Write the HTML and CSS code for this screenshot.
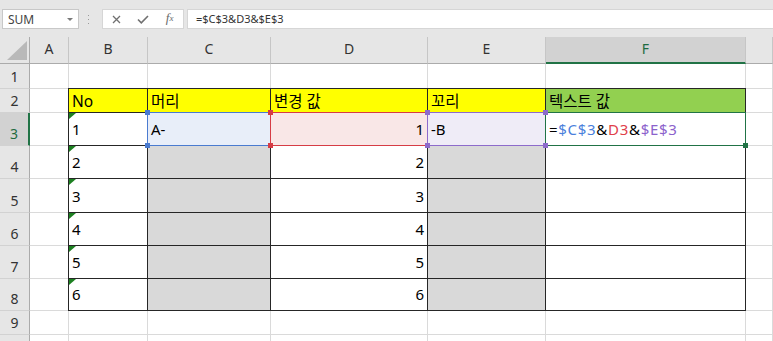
FILE: index.html
```html
<!DOCTYPE html>
<html lang="ko">
<head>
<meta charset="utf-8">
<title>Excel</title>
<link rel="stylesheet" href="styles.css">
</head>
<body>
<div class="bar">
  <div class="namebox"><span>SUM</span><span class="caret"></span></div>
  <svg class="grip" width="3" height="10" viewBox="0 0 3 10"><rect x="1" y="0" width="1" height="1" fill="#9a9a9a"/><rect x="1" y="4" width="1" height="1" fill="#9a9a9a"/><rect x="1" y="8" width="1" height="1" fill="#9a9a9a"/></svg>
  <div class="fxbox">
    <span class="ico"><svg width="9" height="9" viewBox="0 0 9 9"><path d="M1 1L8 8M8 1L1 8" stroke="#707070" stroke-width="1.3" fill="none"/></svg></span>
    <span class="ico"><svg width="12" height="9" viewBox="0 0 12 9"><path d="M1 4.5L4.3 7.8L11 1" stroke="#707070" stroke-width="1.6" fill="none"/></svg></span>
    <span class="ico fx">f<sub>x</sub></span>
  </div>
  <div class="formula">=$C$3&amp;D3&amp;$E$3</div>
</div>
<div class="sheet">
  <!-- header -->
  <div class="c corner"><svg width="21" height="20" viewBox="0 0 21 20"><polygon points="20,0 20,19 0,19" fill="#b9b9b9"/></svg></div>
  <div class="c ch">A</div><div class="c ch">B</div><div class="c ch">C</div><div class="c ch">D</div><div class="c ch">E</div><div class="c ch sel">F</div><div class="c ch"></div>
  <!-- row 1 -->
  <div class="c rh">1</div><div class="c"></div><div class="c"></div><div class="c"></div><div class="c"></div><div class="c"></div><div class="c"></div><div class="c"></div>
  <!-- row 2 -->
  <div class="c rh">2</div><div class="c"></div>
  <div class="c t hd yel tl tt">No</div>
  <div class="c t hd yel tt">머리</div>
  <div class="c t hd yel tt">변경 값</div>
  <div class="c t hd yel tt">꼬리</div>
  <div class="c t hd grn tt">텍스트 값</div>
  <div class="c"></div>
  <!-- row 3 -->
  <div class="c rh rsel">3</div><div class="c"></div>
  <div class="c t v tl tri">1</div>
  <div class="c t v rel fb">A-<span class="ref blue"><span class="h h1"></span><span class="h h2"></span><span class="h h3"></span><span class="h h4"></span></span></div>
  <div class="c t v rel fr num">1<span class="ref red"><span class="h h1"></span><span class="h h2"></span><span class="h h3"></span><span class="h h4"></span></span></div>
  <div class="c t v rel fp">-B<span class="ref purple"><span class="h h1"></span><span class="h h2"></span><span class="h h3"></span><span class="h h4"></span></span></div>
  <div class="c t v rel"><span class="fm"><span>=</span><span class="kb">$C$3</span><span>&amp;</span><span class="kr">D3</span><span>&amp;</span><span class="kp">$E$3</span></span><span class="ref active"><span class="h h4"></span></span></div>
  <div class="c"></div>
  <!-- row 4 -->
  <div class="c rh">4</div><div class="c"></div>
  <div class="c t v tl tri">2</div><div class="c t gry"></div><div class="c t v num">2</div><div class="c t gry"></div><div class="c t"></div><div class="c"></div>
  <!-- row 5 -->
  <div class="c rh">5</div><div class="c"></div>
  <div class="c t v tl tri">3</div><div class="c t gry"></div><div class="c t v num">3</div><div class="c t gry"></div><div class="c t"></div><div class="c"></div>
  <!-- row 6 -->
  <div class="c rh">6</div><div class="c"></div>
  <div class="c t v tl tri">4</div><div class="c t gry"></div><div class="c t v num">4</div><div class="c t gry"></div><div class="c t"></div><div class="c"></div>
  <!-- row 7 -->
  <div class="c rh">7</div><div class="c"></div>
  <div class="c t v tl tri">5</div><div class="c t gry"></div><div class="c t v num">5</div><div class="c t gry"></div><div class="c t"></div><div class="c"></div>
  <!-- row 8 -->
  <div class="c rh">8</div><div class="c"></div>
  <div class="c t v tl tri">6</div><div class="c t gry"></div><div class="c t v num">6</div><div class="c t gry"></div><div class="c t"></div><div class="c"></div>
  <!-- row 9 -->
  <div class="c rh">9</div><div class="c"></div><div class="c"></div><div class="c"></div><div class="c"></div><div class="c"></div><div class="c"></div><div class="c"></div>
  <!-- row 10 (only its top edge is in view) -->
  <div class="c rh last"></div><div class="c last"></div><div class="c last"></div><div class="c last"></div><div class="c last"></div><div class="c last"></div><div class="c last"></div><div class="c last"></div>
</div>
</body>
</html>
```

FILE: styles.css
```css
* { box-sizing: border-box; margin: 0; padding: 0; }
html, body { width: 773px; height: 341px; overflow: hidden; }
body { background: #fff; font-family: "Noto Sans", "Noto Sans CJK KR", sans-serif; color: #000; }

/* formula bar */
.bar { height: 37px; background: #e6e6e6; display: flex; align-items: flex-start; padding: 9px 0 0 2px; }
.namebox { width: 77px; height: 20px; background: #fff; border: 1px solid #c8c8c8; display: flex; align-items: center; justify-content: space-between; padding: 0 5px 0 5px; font-size: 12px; color: #444; }
.caret { width: 0; height: 0; border-left: 3px solid transparent; border-right: 3px solid transparent; border-top: 3px solid #7a7a7a; }
.grip { margin: 6px 0 0 8px; }
.fxbox { margin-left: 12px; width: 82px; height: 20px; background: #fff; border: 1px solid #d6d6d6; display: flex; }
.ico { width: 27px; display: flex; align-items: center; justify-content: center; }
.fx { font-family: "Liberation Serif", serif; font-style: italic; font-size: 13px; color: #6a6a6a; padding-bottom: 2px; }
.fx sub { font-size: 9px; vertical-align: -2px; }
.formula { flex: 1; margin-left: 3px; height: 20px; background: #fff; border: 1px solid #d6d6d6; border-right: none; font-size: 11px; color: #333; padding: 0 0 0 8px; line-height: 18px; }

/* sheet */
.sheet { display: grid; grid-template-columns: 30px 39px 79px 123px 157px 118px 200px 1fr; grid-template-rows: 27px 25px 24px 33px 33px 34px 33px 33px 32px 24px 6px; }
.c { border-right: 1px solid #dadada; border-bottom: 1px solid #dadada; display: flex; align-items: flex-end; white-space: nowrap; font-size: 15px; line-height: 15px; padding: 0 3px 8px 3px; }
.c.last { border-bottom: none; padding: 0; }
.corner { background: #e6e6e6; border-right-color: #ababab; border-bottom-color: #ababab; padding: 0 0 2px 7px; align-items: flex-end; }
.ch { background: #e6e6e6; border-right-color: #c6c6c6; border-bottom-color: #ababab; justify-content: center; font-size: 14px; line-height: 14px; color: #333; padding-bottom: 7px; }
.ch.sel { background: #d2d2d2; border-bottom: 2px solid #217346; color: #1e6b40; padding-bottom: 6px; }
.rh { background: #e6e6e6; border-right-color: #ababab; border-bottom-color: #d2d2d2; justify-content: center; font-size: 14px; line-height: 14px; color: #333; padding: 0 0 4px 0; }
.rh.rsel { background: #d2d2d2; border-right: 2px solid #217346; color: #1e6b40; }

.t { border-right-color: #262626; border-bottom-color: #262626; }
.tl { box-shadow: -1px 0 0 #262626; }
.tt { box-shadow: 0 -1px 0 #262626; }
.tl.tt { box-shadow: -1px 0 0 #262626, 0 -1px 0 #262626, -1px -1px 0 #262626; }
.hd { padding-bottom: 3px; font-size: 15.5px; }
.yel { background: #ffff00; }
.grn { background: #92d050; }
.gry { background: #d9d9d9; }
.num { justify-content: flex-end; }

.tri { position: relative; }
.tri::before { content: ""; position: absolute; left: 0; top: 0; border-top: 6px solid #1d8021; border-right: 7px solid transparent; }

.rel { position: relative; }
.fb { background: #e8eef9; }
.fr { background: #f9e7e7; }
.fp { background: #efecf7; }
.ref { position: absolute; left: -1px; top: -1px; right: -1px; bottom: -1px; border: 1px solid; }
.blue { border-color: #4a7bd0; }
.red { border-color: #d63c45; }
.purple { border-color: #8d6bcb; }
.active { border-color: #217346; }
.h { position: absolute; width: 5px; height: 5px; z-index: 2; }
.blue .h { background: #4a7bd0; }
.red .h { background: #d63c45; }
.purple .h { background: #8d6bcb; }
.active .h { background: #217346; }
.h1 { left: -3px; top: -3px; }
.h2 { right: -3px; top: -3px; }
.h3 { left: -3px; bottom: -3px; }
.h4 { right: -3px; bottom: -3px; }

.fm { letter-spacing: 0.7px; }
.kb { color: #4a7fdc; }
.kr { color: #e0404a; }
.kp { color: #8c62cc; }
```
